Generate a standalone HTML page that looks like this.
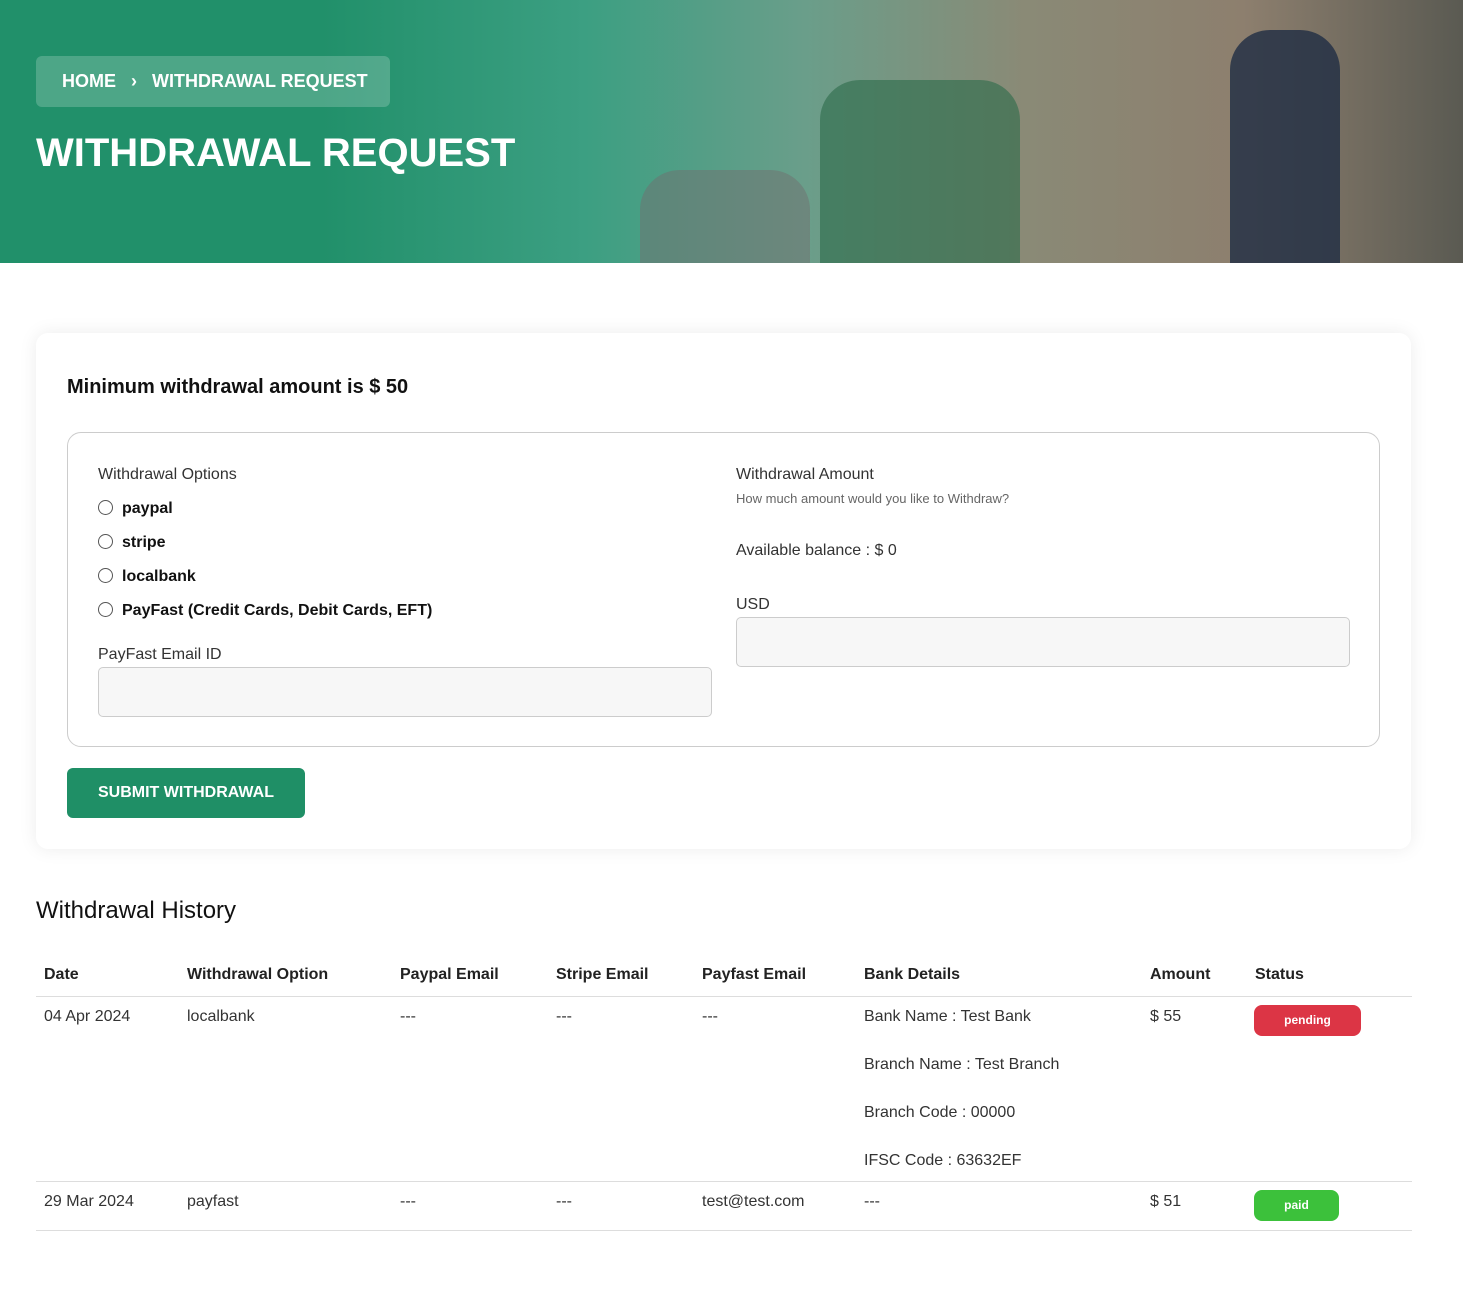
<!DOCTYPE html>
<html><head><meta charset="utf-8"><style>
*{box-sizing:border-box;margin:0;padding:0}
body{width:1463px;height:1294px;font-family:"Liberation Sans",Arial,sans-serif;background:#fff;color:#222;position:relative;overflow:hidden}
.hero{position:absolute;left:0;top:0;width:1463px;height:263px;background:linear-gradient(90deg,#21906a 0%,#21906a 22%,#3c9f82 40%,#6a9e8a 55%,#8a8a76 70%,#8d7f6e 85%,#5a5a52 100%);overflow:hidden}
.a{position:absolute}
.bc{left:36px;top:56px;width:354px;height:51px;background:rgba(255,255,255,.2);border-radius:6px;color:#fff;font-weight:bold;font-size:18px;line-height:51px;padding-left:26px;white-space:nowrap}
.title{left:36px;top:131px;color:#fff;font-weight:bold;font-size:40px;white-space:nowrap}
.card{left:36px;top:333px;width:1375px;height:516px;border-radius:12px;box-shadow:0 0 18px rgba(0,0,0,.08);background:#fff}
.inner{left:67px;top:432px;width:1313px;height:315px;border:1px solid #ccc;border-radius:14px}
.lbl{font-size:16px;color:#333}
.rad{font-size:16px;font-weight:bold;color:#111}
.rad i{display:inline-block;width:15px;height:15px;border:1px solid #555;border-radius:50%;vertical-align:-2px;margin-right:9px}
.inp{background:#f7f7f7;border:1px solid #ccc;border-radius:5px;height:50px}
.btn{left:67px;top:768px;width:238px;height:50px;background:#1f8f66;border-radius:6px;color:#fff;font-weight:bold;font-size:16px;line-height:50px;text-align:center}
.th{font-weight:bold;font-size:16px;color:#222;top:966px}
.td{font-size:16px;color:#333}
.line{left:36px;width:1376px;height:1px;background:#ddd}
.badge{border-radius:8px;color:#fff;font-weight:bold;font-size:12px;text-align:center;line-height:31px;height:31px}
</style></head><body>
<div class="hero">
<div class="a" style="left:820px;top:80px;width:200px;height:183px;background:#2c6a4a;opacity:.6;border-radius:40px 40px 0 0"></div>
<div class="a" style="left:1230px;top:30px;width:110px;height:233px;background:#1f2d44;opacity:.8;border-radius:40px 40px 0 0"></div>
<div class="a" style="left:640px;top:170px;width:170px;height:93px;background:#707070;opacity:.5;border-radius:40px 40px 0 0"></div>
</div>
<div class="a bc">HOME &nbsp;&nbsp;›&nbsp;&nbsp; WITHDRAWAL REQUEST</div>
<div class="a title">WITHDRAWAL REQUEST</div>
<div class="a card"></div>
<div class="a" style="left:67px;top:376px;font-size:20px;font-weight:bold;color:#111">Minimum withdrawal amount is $ 50</div>
<div class="a inner"></div>
<div class="a lbl" style="left:98px;top:466px">Withdrawal Options</div>
<div class="a rad" style="left:98px;top:500px"><i></i>paypal</div>
<div class="a rad" style="left:98px;top:534px"><i></i>stripe</div>
<div class="a rad" style="left:98px;top:568px"><i></i>localbank</div>
<div class="a rad" style="left:98px;top:602px"><i></i>PayFast (Credit Cards, Debit Cards, EFT)</div>
<div class="a lbl" style="left:98px;top:646px">PayFast Email ID</div>
<div class="a inp" style="left:98px;top:667px;width:614px"></div>
<div class="a lbl" style="left:736px;top:466px">Withdrawal Amount</div>
<div class="a" style="left:736px;top:491px;font-size:13px;color:#666">How much amount would you like to Withdraw?</div>
<div class="a lbl" style="left:736px;top:542px">Available balance : $ 0</div>
<div class="a lbl" style="left:736px;top:596px">USD</div>
<div class="a inp" style="left:736px;top:617px;width:614px"></div>
<div class="a btn">SUBMIT WITHDRAWAL</div>
<div class="a" style="left:36px;top:897px;font-size:24px;color:#111">Withdrawal History</div>
<div class="a th" style="left:44px">Date</div>
<div class="a th" style="left:187px">Withdrawal Option</div>
<div class="a th" style="left:400px">Paypal Email</div>
<div class="a th" style="left:556px">Stripe Email</div>
<div class="a th" style="left:702px">Payfast Email</div>
<div class="a th" style="left:864px">Bank Details</div>
<div class="a th" style="left:1150px">Amount</div>
<div class="a th" style="left:1255px">Status</div>
<div class="a line" style="top:996px"></div>
<div class="a td" style="left:44px;top:1008px">04 Apr 2024</div>
<div class="a td" style="left:187px;top:1008px">localbank</div>
<div class="a td" style="left:400px;top:1008px">---</div>
<div class="a td" style="left:556px;top:1008px">---</div>
<div class="a td" style="left:702px;top:1008px">---</div>
<div class="a td" style="left:864px;top:1008px">Bank Name : Test Bank</div>
<div class="a td" style="left:864px;top:1056px">Branch Name : Test Branch</div>
<div class="a td" style="left:864px;top:1104px">Branch Code : 00000</div>
<div class="a td" style="left:864px;top:1152px">IFSC Code : 63632EF</div>
<div class="a td" style="left:1150px;top:1008px">$ 55</div>
<div class="a badge" style="left:1254px;top:1005px;width:107px;background:#dc3545">pending</div>
<div class="a line" style="top:1181px"></div>
<div class="a td" style="left:44px;top:1193px">29 Mar 2024</div>
<div class="a td" style="left:187px;top:1193px">payfast</div>
<div class="a td" style="left:400px;top:1193px">---</div>
<div class="a td" style="left:556px;top:1193px">---</div>
<div class="a td" style="left:702px;top:1193px">test@test.com</div>
<div class="a td" style="left:864px;top:1193px">---</div>
<div class="a td" style="left:1150px;top:1193px">$ 51</div>
<div class="a badge" style="left:1254px;top:1190px;width:85px;background:#3cc13b">paid</div>
<div class="a line" style="top:1230px"></div>
</body></html>
